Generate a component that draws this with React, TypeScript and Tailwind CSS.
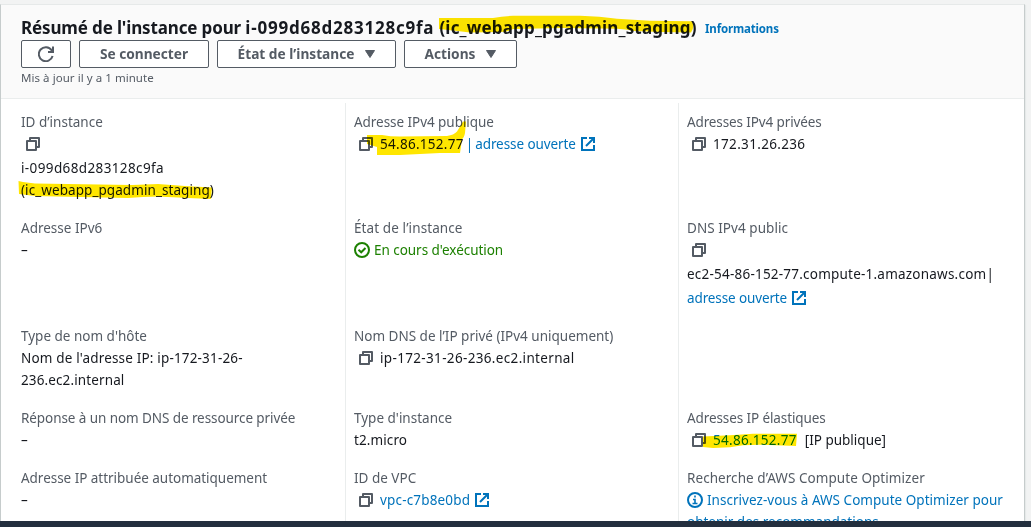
import React from "react";

function CopyIcon() {
  return (
    <svg className="block h-[14px] w-[14px] shrink-0" viewBox="0 0 14 14" fill="none" stroke="#545b64" strokeWidth="2" strokeLinejoin="round">
      <path d="M4 4V1H13V10H10" />
      <path d="M1 4H10V13H1Z" />
    </svg>
  );
}

function ExternalIcon() {
  return (
    <svg className="block h-[14px] w-[14px] shrink-0" viewBox="0 0 14 14" fill="none" stroke="#0073bb" strokeWidth="2">
      <path d="M6 1H1V13H13V8" />
      <path d="M8 1H13V6M13 1L5 9" />
    </svg>
  );
}

function CheckIcon() {
  return (
    <svg className="block h-4 w-4 shrink-0" viewBox="0 0 16 16" fill="none" stroke="#1d8102" strokeWidth="2">
      <circle cx="8" cy="8" r="7" />
      <path d="M4.5 7.8L7.2 10.3L11.5 6" />
    </svg>
  );
}

function InfoIcon() {
  return (
    <svg className="block h-4 w-4 shrink-0" viewBox="0 0 16 16" fill="none" stroke="#0073bb" strokeWidth="2">
      <circle cx="8" cy="8" r="7" />
      <path d="M8 3.5V5.5M6 7.5H8V11.5M5.5 11.5H10.5" strokeWidth="1.6" />
    </svg>
  );
}

function Caret() {
  return (
    <svg className="block h-2 w-[10px]" viewBox="0 0 10 8" fill="#545b64" stroke="#545b64" strokeLinejoin="round">
      <path d="M0.5 0.5H9.5L5 7.5Z" />
    </svg>
  );
}

function MarkerStrokes() {
  return (
    <svg
      className="pointer-events-none absolute top-0 left-0 h-[527px] w-[1031px] mix-blend-multiply"
      viewBox="0 0 1031 527"
      fill="#ffe600"
    >
      <path d="M439 18H493Q503 16 513 15.8H580Q600 16.5 617 18.7L650 20.7L692 21.3Q695 27 691 32.5L660 32L635 31Q625 29 617 28.7L563 28L513 29Q508 32 500 32L470 32.5L453 30.5L439 29Z" />
      <path d="M18.5 181L23 182L35 183.5L132 185L158 184L185 186L212 187.5L211 199L188 198L158 196.5Q143 196.5 128 198L80 197L35 196L19 194Z" />
      <path d="M367 135H382Q390 136.5 400 136.5L447 136Q454 135 457 131.5L463 121.5H466L465 133Q464 138 462 139L460 153H440L400 155H377V147L367 144Z" />
      <path d="M703 436.5L730 435.3L753 433.7H797L796 446L760 444.7L743 445.3L730 447.3L713 448L703 447Z" />
    </svg>
  );
}

function Label({ children, className = "" }: { children: React.ReactNode; className?: string }) {
  return <div className={`h-[22px] text-[#545b64] ${className}`}>{children}</div>;
}

const btn =
  "flex h-7 items-center justify-center rounded-[2px] border border-[#545b64] bg-white text-[13.7px] font-bold text-[#545b64]";
const copyRow = "flex h-[22px] items-center pl-[5px]";

export default function App() {
  return (
    <div className="relative flex h-[527px] w-[1031px] flex-col overflow-hidden bg-[#f2f3f3] pt-1 font-['Noto_Sans',sans-serif] text-[13.5px] leading-[22px] whitespace-nowrap text-[#16191f]">
      <div className="flex h-[517px] w-[1025px] flex-col overflow-hidden border-x border-t border-x-[#c6cccc] border-t-[#e6e9e9] bg-white shadow-[1px_1px_1px_0_#e6e9e9]">
        <header className="flex h-[94px] shrink-0 flex-col border-b border-[#eaeded] bg-[#fafafa] pt-[11px] pl-5">
          <div className="flex h-6 items-center">
            <h1 className="w-[684px] text-[17px] font-bold">
              <span className="tracking-[-0.14px]">Résumé de l'instance pour </span>
              <span className="tracking-[0.77px]">i-099d68d283128c9fa </span>
              <span className="tracking-[0.18px]">(ic_webapp_pgadmin_staging)</span>
            </h1>
            <a className="pt-[2px] text-[11.5px] font-bold tracking-[-0.16px] text-[#0073bb]">Informations</a>
          </div>
          <div className="flex gap-2">
            <button className={`${btn} w-[50px]`}>
              <svg className="h-4 w-4" viewBox="0 0 16 16" fill="none" stroke="#545b64" strokeWidth="2">
                <path d="M14.6 10A7 7 0 1 1 13.6 4.2L15 6" />
                <path d="M10 6H15V0.5" />
              </svg>
            </button>
            <button className={`${btn} w-[130px]`}>Se connecter</button>
            <button className={`${btn} w-[179px] gap-[11px]`}>
              État de l’instance <Caret />
            </button>
            <button className={`${btn} w-[113px] gap-[11px]`}>
              Actions <Caret />
            </button>
          </div>
          <div className="text-[11.5px] leading-[20px] tracking-[0.05px] text-[#545b64]">Mis à jour il y a 1 minute</div>
        </header>

        <main className="mt-1 grid h-[430px] shrink-0 grid-cols-[344px_333px_1fr]">
          <section className="flex flex-col gap-4 pt-2 pl-5">
            <div className="h-[90px]">
              <Label>ID d’instance</Label>
              <div className="flex h-6 items-start pt-1 pl-[5px]"><CopyIcon /></div>
              <div className="tracking-[0.38px]">i-099d68d283128c9fa</div>
              <div className="tracking-[0.07px]">(ic_webapp_pgadmin_staging)</div>
            </div>
            <div className="h-[92px]">
              <Label>Adresse IPv6</Label>
              <div>–</div>
            </div>
            <div className="h-[66px]">
              <Label>Type de nom d'hôte</Label>
              <div className="tracking-[0.17px]">Nom de l'adresse IP: ip-172-31-26-</div>
              <div className="tracking-[0.12px]">236.ec2.internal</div>
            </div>
            <div>
              <Label className="tracking-[-0.08px]">Réponse à un nom DNS de ressource privée</Label>
              <div>–</div>
            </div>
            <div>
              <Label className="tracking-[-0.03px]">Adresse IP attribuée automatiquement</Label>
              <div>–</div>
            </div>
          </section>

          <section className="flex flex-col gap-4 border-l border-[#eaeded] pt-2 pl-2">
            <div className="h-[90px]">
              <Label className="tracking-[-0.05px]">Adresse IPv4 publique</Label>
              <div className={copyRow}>
                <CopyIcon />
                <span className="ml-[7px] tracking-[0.28px]">54.86.152.77</span>
                <span className="ml-[2px] text-[#0073bb]">|</span>
                <span className="ml-[2px] tracking-[-0.08px] text-[#0073bb]">adresse ouverte</span>
                <span className="ml-[5px]"><ExternalIcon /></span>
              </div>
            </div>
            <div className="h-[92px]">
              <Label className="tracking-[0.1px]">État de l’instance</Label>
              <div className="flex h-[22px] items-center gap-1 text-[#1d8102]">
                <CheckIcon />
                <span className="tracking-[-0.04px]">En cours d'exécution</span>
              </div>
            </div>
            <div className="h-[66px]">
              <Label>Nom DNS de l’IP privé (IPv4 uniquement)</Label>
              <div className={copyRow}>
                <CopyIcon />
                <span className="ml-[7px] tracking-[0.34px]">ip-172-31-26-236.ec2.internal</span>
              </div>
            </div>
            <div>
              <Label>Type d'instance</Label>
              <div className="tracking-[0.1px]">t2.micro</div>
            </div>
            <div>
              <Label>ID de VPC</Label>
              <div className={copyRow}>
                <CopyIcon />
                <span className="ml-[7px] tracking-[0.17px] text-[#0073bb]">vpc-c7b8e0bd</span>
                <span className="ml-[5px]"><ExternalIcon /></span>
              </div>
            </div>
          </section>

          <section className="flex flex-col gap-4 border-l border-[#eaeded] pt-2 pl-2">
            <div className="h-[90px]">
              <Label className="tracking-[-0.12px]">Adresses IPv4 privées</Label>
              <div className={copyRow}>
                <CopyIcon />
                <span className="ml-[7px] tracking-[0.33px]">172.31.26.236</span>
              </div>
            </div>
            <div className="h-[92px]">
              <Label className="tracking-[0.05px]">DNS IPv4 public</Label>
              <div className="flex h-6 items-start pt-1 pl-[5px]"><CopyIcon /></div>
              <div className="h-6">
                <span className="tracking-[0.22px]">ec2-54-86-152-77.compute-1.amazonaws.com</span>
                <span>|</span>
              </div>
              <div className="flex h-[22px] items-center text-[#0073bb]">
                <span className="tracking-[-0.12px]">adresse ouverte</span>
                <span className="ml-[5px]"><ExternalIcon /></span>
              </div>
            </div>
            <div className="h-[66px]" />
            <div>
              <Label className="tracking-[-0.1px]">Adresses IP élastiques</Label>
              <div className={copyRow}>
                <CopyIcon />
                <span className="ml-[7px] tracking-[0.28px] text-[#0073bb]">54.86.152.77</span>
                <span className="ml-2">[IP publique]</span>
              </div>
            </div>
            <div>
              <Label className="tracking-[0.06px]">Recherche d’AWS Compute Optimizer</Label>
              <div className="flex h-[22px] items-center gap-1 text-[#0073bb]">
                <InfoIcon />
                <span className="tracking-[0.03px]">Inscrivez-vous à AWS Compute Optimizer pour</span>
              </div>
              <div className="text-[#0073bb]">obtenir des recommandations.</div>
            </div>
          </section>
        </main>
      </div>
      <footer className="relative h-[6px] shrink-0 bg-[#232f3e]" />
      <MarkerStrokes />
    </div>
  );
}
